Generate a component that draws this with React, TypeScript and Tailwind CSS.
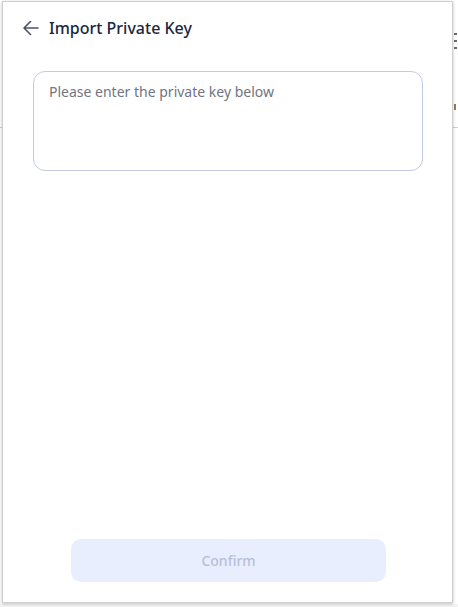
import React, { useState } from 'react';

const BackArrow: React.FC = () => (
  <svg width="18" height="18" viewBox="0 0 18 18" fill="none" aria-hidden="true">
    <path d="M16 9H2M8.5 2.5L2 9l6.5 6.5" stroke="#4b5268" strokeWidth="1.6" strokeLinecap="round" strokeLinejoin="round" />
  </svg>
);

const ImportPrivateKey: React.FC = () => {
  const [value, setValue] = useState('');

  return (
    <div className="absolute left-[2px] top-[1px] w-[451px] h-[602px] bg-white border border-[#cfcfcf] shadow-[0_1px_3px_rgba(0,0,0,0.25)] flex flex-col">
      {/* Header */}
      <div className="flex items-center gap-[9px] pl-[19px] h-[52px]">
        <button type="button" className="flex items-center justify-center w-[18px] h-[18px]">
          <BackArrow />
        </button>
        <h1 className="text-[16px] font-medium text-[#1c2640] leading-[22px]">Import Private Key</h1>
      </div>

      {/* Key input */}
      <div className="px-[30px] pt-[17px]">
        <textarea
          value={value}
          onChange={e => setValue(e.target.value)}
          placeholder="Please enter the private key below"
          className="block w-[390px] h-[100px] resize-none rounded-[12px] border border-[#c3c9e2] px-[15px] pt-[10px] text-[14px] leading-[20px] text-[#1c2640] placeholder:text-[#71757f] outline-none"
        />
      </div>

      <div className="flex-1" />

      {/* Footer */}
      <div className="flex justify-center pb-[20px] pl-[2px]">
        <button
          type="button"
          disabled
          className="w-[315px] h-[43px] rounded-[10px] bg-[#e8eefe] text-[14px] font-medium text-[#b6bfd9]"
        >
          Confirm
        </button>
      </div>
    </div>
  );
};

export default function App() {
  return (
    <div
      className="relative w-[458px] h-[607px] overflow-hidden bg-[#f4f4f4]"
      style={{ fontFamily: '"Noto Sans", "Open Sans", sans-serif' }}
    >
      {/* page behind the popup, only its right edge peeks out */}
      <div className="absolute inset-x-0 top-0 h-[604px] bg-white">
        <div className="flex justify-end h-[128px] border-b border-[#cfcfcf]">
          <div className="flex flex-col w-[3px] mr-[1px] pt-[33px] gap-[5px]">
            <div className="h-[2px] bg-[#6a6a6a]" />
            <div className="h-[2px] bg-[#6a6a6a]" />
            <div className="h-[2px] bg-[#6a6a6a]" />
            <div className="h-[6px] w-[2px] mt-[50px] bg-[#9a7a5a]" />
          </div>
        </div>
      </div>
      <ImportPrivateKey />
    </div>
  );
}
